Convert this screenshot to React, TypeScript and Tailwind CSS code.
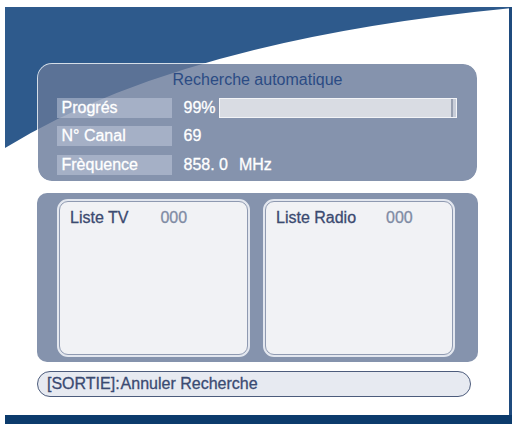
import React from "react";

const font = { fontFamily: '"Liberation Sans", Arial, sans-serif' };

function LabelRow({ label, children }: { label: string; children: React.ReactNode }) {
  return (
    <div className="flex items-center h-[20px]">
      <div className="w-[115px] h-[20px] bg-[rgba(205,212,228,0.45)] pl-[5px] flex items-center text-white text-[16px] leading-[20px]">
        {label}
      </div>
      <div className="ml-[12px] flex items-center text-white text-[16px] leading-[20px]">{children}</div>
    </div>
  );
}

function ListBox({ title, count, gap }: { title: string; count: string; gap: string }) {
  return (
    <div className="h-[158px] rounded-[11px] border-2 border-[#e3e7ef] bg-[#e3e7ef]">
      <div className="h-full rounded-[9px] border border-[#8f9ab1] bg-[#f1f2f5] pl-[10px] pt-[7px]">
        <div className={`flex text-[16px] leading-[18px] ${gap}`}>
          <span className="text-[#3b4a70]">{title}</span>
          <span className="text-[#7f8ba4]">{count}</span>
        </div>
      </div>
    </div>
  );
}

export default function App() {
  const progress = 99;
  return (
    <div
      className="relative w-[515px] h-[424px] overflow-hidden bg-white [-webkit-text-stroke:0.3px_currentColor]"
      style={font}
    >
      <svg className="absolute inset-0" width="515" height="424" viewBox="0 0 515 424">
        <path d="M5,7 H512 V8 Q180,40 5,148 Z" fill="#2e5a8c" />
        <rect x="509" y="7" width="3" height="417" fill="#1f4b7e" />
        <rect x="5" y="415" width="507" height="9" fill="#0c3b6c" />
      </svg>
      <div className="relative flex flex-col pl-[37px] pt-[63px]">
        <div className="w-[441px] h-[119px] rounded-[15px] border-[1.5px] border-white/80 bg-clip-padding bg-[rgba(102,120,152,0.8)] pt-[6px] px-[18.5px]">
          <div className="text-center text-[16px] leading-[19px] text-[#2b4b84] [-webkit-text-stroke:0px]">
            Recherche automatique
          </div>
          <div className="mt-[8.5px] flex flex-col gap-[8.5px]">
            <LabelRow label="Progrés">
              <span className="w-[35px]">{progress}%</span>
              <div className="w-[238px] h-[20px] border-[1.5px] border-[#f3f4f7] bg-[#c9ced9]">
                <div
                  className="h-full bg-[#d9dce3] border-r-[2px] border-[#98a0b1]"
                  style={{ width: `${progress}%` }}
                />
              </div>
            </LabelRow>
            <LabelRow label="N° Canal">
              <span>69</span>
            </LabelRow>
            <LabelRow label="Frèquence">
              <span>858. 0</span>
              <span className="ml-[11px]">MHz</span>
            </LabelRow>
          </div>
        </div>
        <div className="mt-[11px] w-[441px] h-[169px] rounded-[10px] bg-[rgba(102,120,152,0.8)] pt-[6px] pl-[20px] pr-[23px] grid grid-cols-[193px_192px] gap-[13px]">
          <ListBox title="Liste TV" count="000" gap="gap-[32px]" />
          <ListBox title="Liste Radio" count="000" gap="gap-[30px]" />
        </div>
        <div className="mt-[9px] w-[434px] h-[26px] rounded-full border-[1.5px] border-[#4d5c7c] bg-[#e7eaf1] pl-[9px] flex items-center text-[16px] leading-[20px] text-[#3a4a72]">
          <span>[SORTIE]:</span>
          <span className="ml-[1px]">Annuler Recherche</span>
        </div>
      </div>
    </div>
  );
}
